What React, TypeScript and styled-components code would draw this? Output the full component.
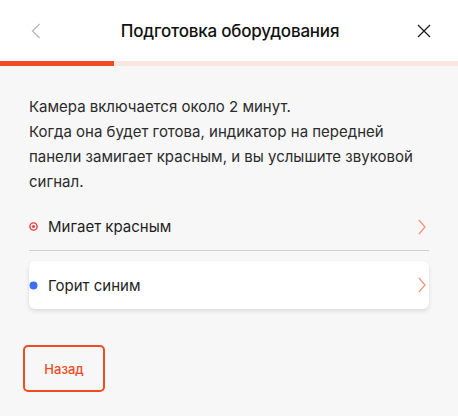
import styled, { createGlobalStyle } from "styled-components";

const GlobalStyle = createGlobalStyle`
  html, body {
    margin: 0;
    padding: 0;
    background: #f7f7f7;
    font-family: Inter, "Liberation Sans", sans-serif;
    color: #222;
  }
`;

const items = [
  { id: "red", label: "Мигает красным", kind: "blink", card: false },
  { id: "blue", label: "Горит синим", kind: "solid", card: true },
];

export default function App() {
  return (
    <>
      <GlobalStyle />
      <Page>
        <Header>
          <IconButton aria-label="back">
            <svg width="10" height="16" viewBox="0 0 10 16">
              <path d="M8.5 1 L1.5 8 L8.5 15" fill="none" stroke="#b8b8b8" strokeWidth="1.3" />
            </svg>
          </IconButton>
          <Title>Подготовка оборудования</Title>
          <IconButton aria-label="close">
            <svg width="14" height="14" viewBox="0 0 14 14">
              <path d="M1 1 L13 13 M13 1 L1 13" fill="none" stroke="#1a1a1a" strokeWidth="1.3" />
            </svg>
          </IconButton>
        </Header>
        <Progress>
          <ProgressFill style={{ width: `${(114 / 458) * 100}%` }} />
        </Progress>
        <Body>
          <Text>
            Камера включается около 2 минут.
            <br />
            Когда она будет готова, индикатор на передней панели замигает
            красным, и вы услышите звуковой сигнал.
          </Text>
          <List>
            {items.map((item) => (
              <Option key={item.id} $card={item.card}>
                {item.kind === "blink" ? (
                  <svg width="9" height="9" viewBox="0 0 9 9">
                    <circle cx="4.5" cy="4.5" r="3.6" fill="none" stroke="#ee3b3b" strokeWidth="1.4" />
                    <circle cx="4.5" cy="4.5" r="1.5" fill="#ee3b3b" />
                  </svg>
                ) : (
                  <svg width="9" height="9" viewBox="0 0 9 9">
                    <circle cx="4.5" cy="4.5" r="4" fill="#3d6cf5" />
                  </svg>
                )}
                <OptionLabel>{item.label}</OptionLabel>
                <svg width="8" height="16" viewBox="0 0 8 16">
                  <path d="M1 1 L7 8 L1 15" fill="none" stroke="#f5957a" strokeWidth="1.3" />
                </svg>
              </Option>
            ))}
          </List>
          <BackButton>Назад</BackButton>
        </Body>
      </Page>
    </>
  );
}

const Page = styled.div`
  width: 458px;
  min-height: 416px;
  background: #f7f7f7;
`;

const Header = styled.div`
  height: 61px;
  background: #fff;
  display: flex;
  align-items: center;
  justify-content: space-between;
  padding: 0 24px 0 26px;
  box-sizing: border-box;
`;

const IconButton = styled.button`
  width: 20px;
  height: 20px;
  padding: 0;
  border: none;
  background: none;
  display: flex;
  align-items: center;
  justify-content: center;
`;

const Title = styled.div`
  font-size: 17px;
  font-weight: 500;
  color: #111;
  letter-spacing: -0.2px;
`;

const Progress = styled.div`
  height: 5px;
  background: #fbe6e1;
`;

const ProgressFill = styled.div`
  height: 100%;
  background: #f24a22;
`;

const Body = styled.div`
  padding: 28px 29px 0 29px;
  display: flex;
  flex-direction: column;
`;

const Text = styled.p`
  margin: 0;
  font-size: 15px;
  line-height: 25px;
  color: #2b2b2b;
`;

const List = styled.div`
  display: flex;
  flex-direction: column;
  margin-top: 9px;
`;

const Option = styled.div<{ $card: boolean }>`
  display: flex;
  align-items: center;
  height: 48px;
  padding: 0 3px 0 0;
  gap: 10px;
  box-sizing: border-box;
  background: ${(p) => (p.$card ? "#fff" : "transparent")};
  border-radius: ${(p) => (p.$card ? "6px" : "0")};
  box-shadow: ${(p) => (p.$card ? "0 2px 4px rgba(0,0,0,0.12)" : "none")};
  border-bottom: ${(p) => (p.$card ? "none" : "1px solid #cfcfcf")};
  margin-bottom: ${(p) => (p.$card ? "0" : "10px")};
`;

const OptionLabel = styled.span`
  flex: 1;
  font-size: 15px;
  color: #1e1e1e;
`;

const BackButton = styled.button`
  margin: 36px 0 0 -6px;
  width: 82px;
  height: 47px;
  border: 2px solid #f24a22;
  border-radius: 5px;
  background: transparent;
  color: #f24a22;
  font-family: Inter, "Liberation Sans", sans-serif;
  font-size: 13px;
  font-weight: 500;
`;
